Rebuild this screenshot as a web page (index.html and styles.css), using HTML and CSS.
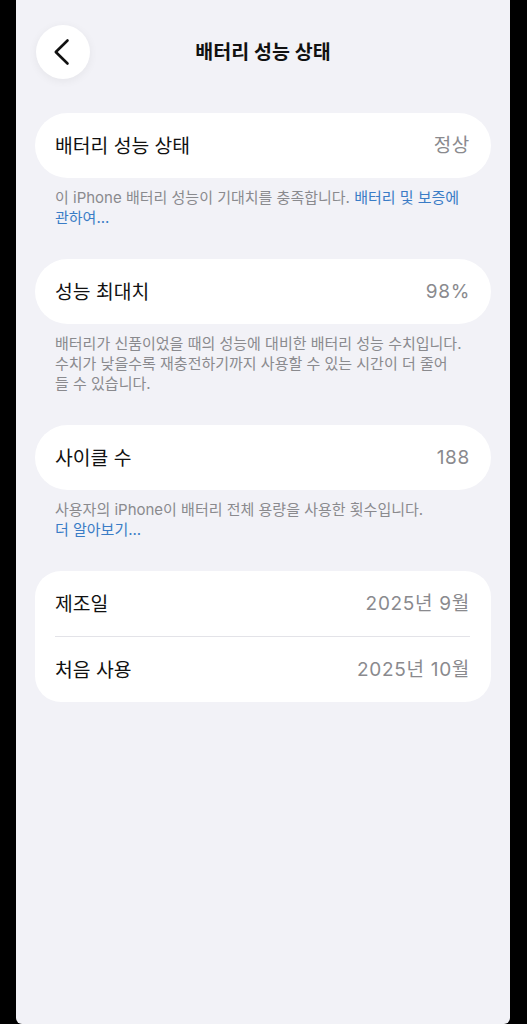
FILE: index.html
```html
<!DOCTYPE html>
<html lang="ko">
<head>
<meta charset="utf-8">
<title>배터리 성능 상태</title>
<link rel="stylesheet" href="styles.css">
</head>
<body>
<div class="phone">
  <header class="nav">
    <button class="back" aria-label="뒤로">
      <svg width="54" height="54" viewBox="0 0 54 54"><path d="M31.5 15.5 L19.8 27 L31.5 38.5" fill="none" stroke="#111" stroke-width="2.6" stroke-linecap="round" stroke-linejoin="round"/></svg>
    </button>
    <h1 class="title">배터리 성능 상태</h1>
    <span class="spacer"></span>
  </header>

  <main class="content">
    <section class="section">
      <div class="card">
        <div class="row"><span class="label">배터리 성능 상태</span><span class="value">정상</span></div>
      </div>
      <p class="note">이 iPhone 배터리 성능이 기대치를 충족합니다. <a class="link">배터리 및 보증에<br>관하여...</a></p>
    </section>

    <section class="section">
      <div class="card">
        <div class="row"><span class="label">성능 최대치</span><span class="value">98%</span></div>
      </div>
      <p class="note">배터리가 신품이었을 때의 성능에 대비한 배터리 성능 수치입니다.<br>수치가 낮을수록 재충전하기까지 사용할 수 있는 시간이 더 줄어<br>들 수 있습니다.</p>
    </section>

    <section class="section">
      <div class="card">
        <div class="row"><span class="label">사이클 수</span><span class="value">188</span></div>
      </div>
      <p class="note">사용자의 iPhone이 배터리 전체 용량을 사용한 횟수입니다.<br><a class="link">더 알아보기...</a></p>
    </section>

    <section class="section">
      <div class="card card-group">
        <div class="row"><span class="label">제조일</span><span class="value">2025년 9월</span></div>
        <div class="divider"></div>
        <div class="row"><span class="label">처음 사용</span><span class="value">2025년 10월</span></div>
      </div>
    </section>
  </main>
</div>
</body>
</html>
```

FILE: styles.css
```css
* { box-sizing: border-box; }

html, body {
  margin: 0;
  padding: 0;
  background: #000;
}

body {
  font-family: Inter, "Noto Sans CJK KR", sans-serif;
  color: #111;
}

.phone {
  margin-left: 16px;
  width: 494px;
  height: 1024px;
  background: #f2f2f7;
  border-radius: 0 0 6px 6px;
  overflow: hidden;
}

.nav {
  display: grid;
  grid-template-columns: 54px 1fr 54px;
  align-items: center;
  padding: 25px 20px 0;
}

.back {
  width: 54px;
  height: 54px;
  padding: 0;
  border: none;
  border-radius: 50%;
  background: #fff;
  box-shadow: 0 2px 10px rgba(0, 0, 0, 0.06);
  display: flex;
  align-items: center;
  justify-content: center;
}

.back svg { display: block; }

.title {
  margin: 0;
  text-align: center;
  font-size: 19.5px;
  font-weight: 600;
  line-height: 24px;
  color: #111;
}

.content {
  margin-top: 34px;
  padding: 0 19px;
}

.section { margin-bottom: 31px; }

.card {
  background: #fff;
  border-radius: 33px;
}

.card-group { border-radius: 26px; }

.row {
  height: 65px;
  display: flex;
  align-items: center;
  justify-content: space-between;
  padding: 0 21px 0 20px;
}

.label {
  font-size: 19.3px;
  line-height: 24px;
  color: #111;
}

.value {
  font-size: 19px;
  line-height: 24px;
  letter-spacing: 0.7px;
  color: #8a8a8e;
}

.divider {
  height: 1px;
  margin: 0 21px 0 20px;
  background: #e3e3e8;
}

.note {
  margin: 10px 0 0;
  padding: 0 20px;
  font-size: 15px;
  line-height: 20px;
  color: #8a8a8e;
}

.link {
  color: #3a7cc6;
}
```
